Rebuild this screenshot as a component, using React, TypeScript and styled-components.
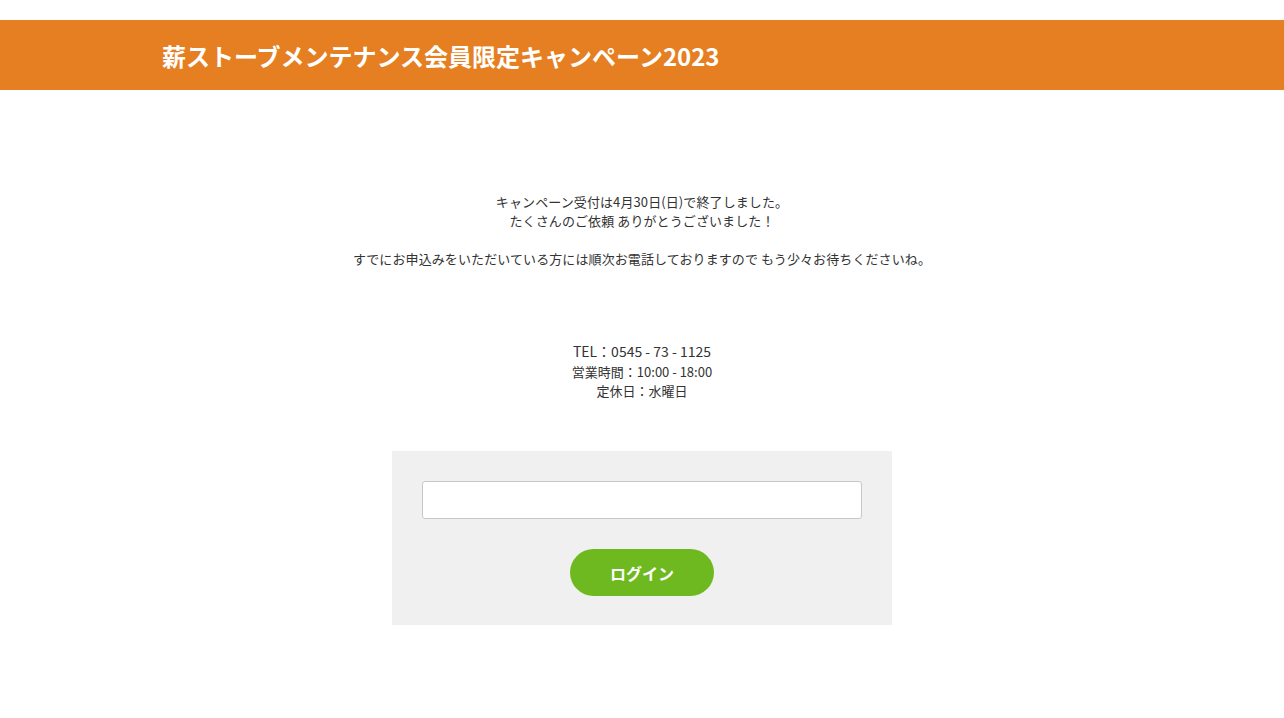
import React, { useState } from 'react';
import styled, { createGlobalStyle } from 'styled-components';

const GlobalStyle = createGlobalStyle`
  * {
    box-sizing: border-box;
  }
  body {
    margin: 0;
    background: #fff;
    color: #333;
    font-family: 'Noto Sans CJK JP', 'Noto Sans', sans-serif;
  }
`;

const Header = styled.header`
  margin-top: 20px;
  background-color: #e57f22;
  height: 70px;
  display: flex;
  align-items: center;
`;

const Inner = styled.div`
  width: 960px;
  margin: 0 auto;
`;

const Title = styled.h1`
  margin: 0;
  color: #fff;
  font-size: 24px;
  font-weight: 700;
`;

const Main = styled.main`
  width: 960px;
  margin: 0 auto;
  padding-top: 102px;
  text-align: center;
`;

const Message = styled.p`
  margin: 0;
  font-size: 13px;
  letter-spacing: 0.1px;
  line-height: 19px;
  color: #333;
`;

const Contact = styled.div`
  margin-top: 73px;
  color: #333;
`;

const ContactLine = styled.p<{ $size: number; $height: number }>`
  margin: 0;
  font-size: ${p => p.$size}px;
  line-height: ${p => p.$height}px;
`;

const LoginBox = styled.form`
  width: 500px;
  margin: 51px auto 0;
  background: #f0f0f0;
  padding: 30px 30px 29px;
  display: flex;
  flex-direction: column;
  align-items: center;
`;

const Input = styled.input`
  width: 440px;
  height: 38px;
  border: 1px solid #c8c8c8;
  border-radius: 3px;
  background: #fff;
  padding: 0 10px;
  font-size: 14px;
  font-family: inherit;
`;

const LoginButton = styled.button`
  margin-top: 30px;
  width: 144px;
  height: 47px;
  border: none;
  border-radius: 24px;
  background: #6fb920;
  color: #fff;
  font-family: inherit;
  font-size: 16px;
  font-weight: 700;
  cursor: pointer;
`;

const App = () => {
  const [password, setPassword] = useState('');

  return (
    <>
      <GlobalStyle />
      <Header>
        <Inner>
          <Title>薪ストーブメンテナンス会員限定キャンペーン2023</Title>
        </Inner>
      </Header>
      <Main>
        <Message>
          キャンペーン受付は4月30日(日)で終了しました。
          <br />
          たくさんのご依頼 ありがとうございました！
          <br />
          <br />
          すでにお申込みをいただいている方には順次お電話しておりますので もう少々お待ちくださいね。
        </Message>
        <Contact>
          <ContactLine $size={14} $height={21}>TEL：0545 - 73 - 1125</ContactLine>
          <ContactLine $size={13} $height={19}>営業時間：10:00 - 18:00</ContactLine>
          <ContactLine $size={13} $height={19}>定休日：水曜日</ContactLine>
        </Contact>
        <LoginBox onSubmit={e => e.preventDefault()}>
          <Input
            type="password"
            value={password}
            onChange={e => setPassword(e.target.value)}
          />
          <LoginButton type="submit">ログイン</LoginButton>
        </LoginBox>
      </Main>
    </>
  );
};

export default App;
